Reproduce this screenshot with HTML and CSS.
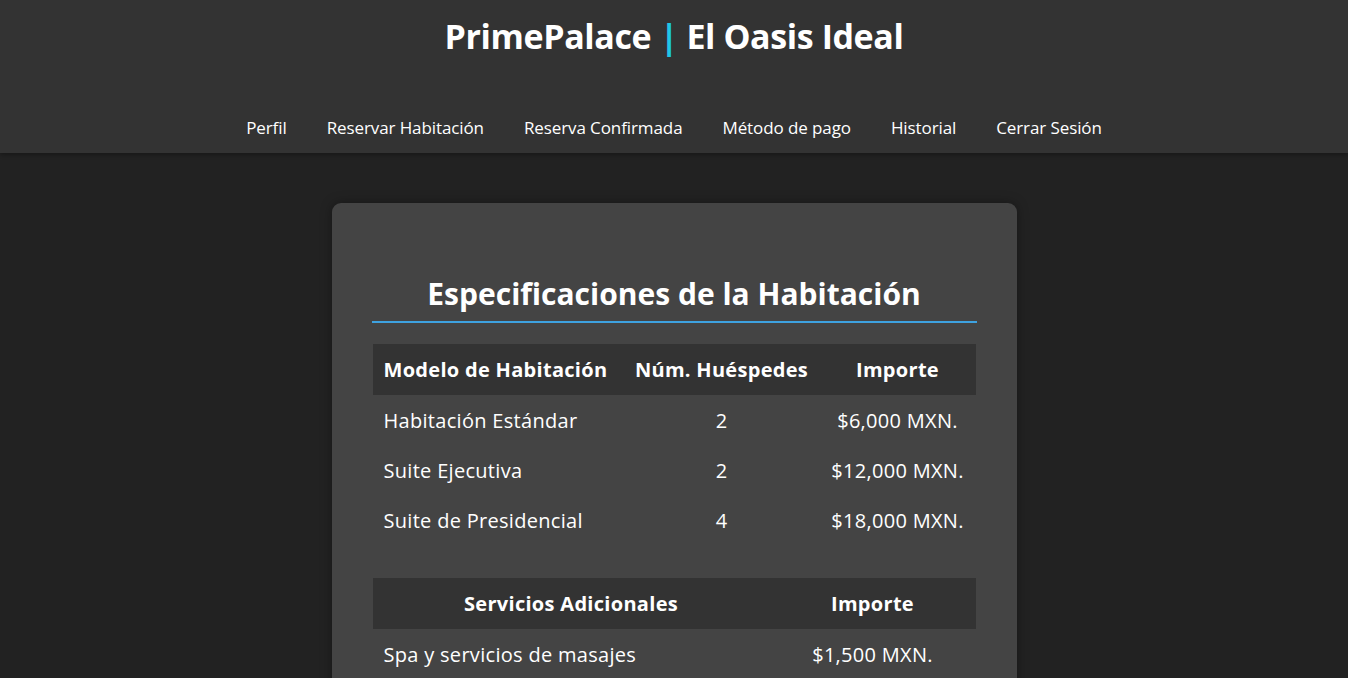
FILE: index.html
```html
<!DOCTYPE html>
<html lang="es">
<head>
<meta charset="utf-8">
<title>PrimePalace | El Oasis Ideal</title>
<link rel="stylesheet" href="styles.css">
</head>
<body>
<header class="site-header">
  <h1 class="brand">PrimePalace <span class="sep">|</span> El Oasis Ideal</h1>
  <nav class="nav">
    <a href="#">Perfil</a>
    <a href="#">Reservar Habitación</a>
    <a href="#">Reserva Confirmada</a>
    <a href="#">Método de pago</a>
    <a href="#">Historial</a>
    <a href="#">Cerrar Sesión</a>
  </nav>
</header>
<main class="main">
  <section class="card">
    <h2 class="card-title">Especificaciones de la Habitación</h2>
    <table class="spec rooms">
      <thead>
        <tr><th class="left">Modelo de Habitación</th><th>Núm. Huéspedes</th><th>Importe</th></tr>
      </thead>
      <tbody>
        <tr><td class="left">Habitación Estándar</td><td>2</td><td>$6,000 MXN.</td></tr>
        <tr><td class="left">Suite Ejecutiva</td><td>2</td><td>$12,000 MXN.</td></tr>
        <tr><td class="left">Suite de Presidencial</td><td>4</td><td>$18,000 MXN.</td></tr>
      </tbody>
    </table>
    <table class="spec services">
      <thead>
        <tr><th>Servicios Adicionales</th><th>Importe</th></tr>
      </thead>
      <tbody>
        <tr><td class="left">Spa y servicios de masajes</td><td>$1,500 MXN.</td></tr>
      </tbody>
    </table>
  </section>
</main>
</body>
</html>
```
FILE: styles.css
```css
* { box-sizing: border-box; }
html, body { margin: 0; padding: 0; }
body {
  background: #222222;
  color: #ffffff;
  font-family: "Open Sans", "Noto Sans", sans-serif;
}
.site-header {
  background: #333333;
  height: 153px;
  display: flex;
  flex-direction: column;
  align-items: center;
  box-shadow: 0 2px 4px rgba(0,0,0,0.3);
}
.brand {
  margin: 14px 0 0;
  font-size: 34px;
  font-weight: 700;
  line-height: 44px;
  letter-spacing: -0.4px;
}
.sep { color: #1ec8e6; }
.nav {
  margin-top: 58px;
  display: flex;
  gap: 40px;
}
.nav a {
  color: #ffffff;
  text-decoration: none;
  font-size: 17px;
  line-height: 24px;
  letter-spacing: -0.1px;
}
.main {
  display: flex;
  justify-content: center;
  padding-top: 50px;
}
.card {
  width: 685px;
  background: #444444;
  border-radius: 9px;
  padding: 71px 40px 40px;
  box-shadow: 0 0 12px rgba(0,0,0,0.35);
}
.card-title {
  margin: 0 0 21px;
  text-align: center;
  font-size: 30px;
  font-weight: 700;
  line-height: 40px;
  letter-spacing: 0;
  padding-bottom: 7px;
  border-bottom: 2px solid #3ea2e0;
}
.spec {
  width: 603px;
  margin: 0 auto 33px;
  border-collapse: collapse;
  table-layout: fixed;
}
.spec th {
  background: #333333;
  font-size: 20px;
  font-weight: 700;
  height: 51px;
  padding: 0 11px;
  text-align: center;
  white-space: nowrap;
  letter-spacing: 0.3px;
}
.spec td {
  font-size: 20px;
  height: 50px;
  padding: 0 11px;
  text-align: center;
  white-space: nowrap;
  letter-spacing: 0.3px;
}
.spec .left { text-align: left; }
.rooms th:nth-child(1) { width: 251px; }
.rooms th:nth-child(2) { width: 196px; }
.services th:nth-child(1) { width: 397px; }
```
